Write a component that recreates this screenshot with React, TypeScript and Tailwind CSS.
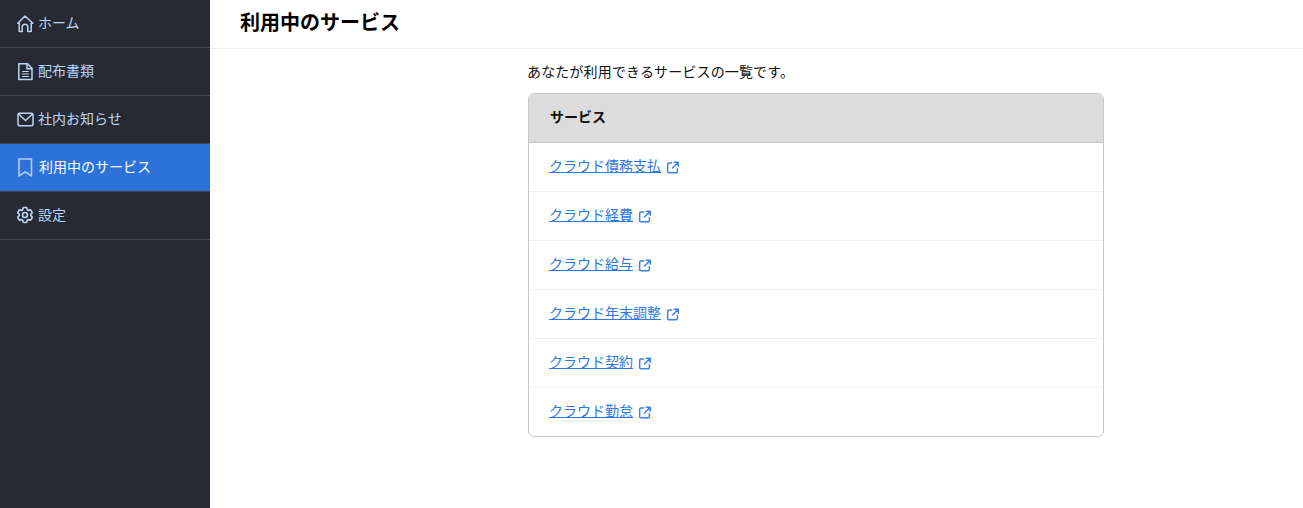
import { HiOutlineCog6Tooth } from 'react-icons/hi2';

const HomeIcon = () => (
  <svg viewBox="0 0 20 20" fill="none" stroke="currentColor" strokeWidth="1.5" strokeLinejoin="round" className="size-5 shrink-0">
    <path d="M2.8 10.2 10 3 17.8 10.2 16.2 10.2V18.5H12.8V14a2.8 2.8 0 0 0-5.6 0V18.5H4.2V10.2Z" />
  </svg>
);

const DocIcon = () => (
  <svg viewBox="0 0 20 20" fill="none" stroke="currentColor" strokeWidth="1.5" strokeLinejoin="round" className="size-5 shrink-0">
    <path d="M3.8 2.8H12.5L17 7.3V18.5H3.8Z" />
    <path d="M12 3V7.8H17" />
    <path d="M7 10.5H13.8M7 13H13.8M7 15.5H13.8" strokeWidth="1.1" />
  </svg>
);

const MailIcon = () => (
  <svg viewBox="0 0 20 20" fill="none" stroke="currentColor" strokeWidth="1.5" strokeLinejoin="round" className="size-5 shrink-0">
    <rect x="3" y="4.2" width="15" height="12.6" rx="1.5" />
    <path d="M3.5 5 10.5 11.5 17.5 5" />
  </svg>
);

const BookmarkIcon = () => (
  <svg viewBox="0 0 20 20" fill="none" stroke="currentColor" strokeWidth="1.6" strokeLinejoin="round" className="size-5 shrink-0">
    <path d="M4 2H16.5V19L10.2 14.8 4 19Z" />
  </svg>
);

const GearIcon = () => <HiOutlineCog6Tooth strokeWidth={2} className="size-5 shrink-0" />;

const NAV_ITEMS = [
  { label: 'ホーム', icon: HomeIcon },
  { label: '配布書類', icon: DocIcon },
  { label: '社内お知らせ', icon: MailIcon },
  { label: '利用中のサービス', icon: BookmarkIcon, active: true },
  { label: '設定', icon: GearIcon },
];

const SERVICES = ['クラウド債務支払', 'クラウド経費', 'クラウド給与', 'クラウド年末調整', 'クラウド契約', 'クラウド勤怠'];

const App = () => {
  return (
    <div className="flex h-[508px] overflow-hidden bg-white text-sm font-['Liberation_Sans','Noto_Sans_CJK_JP',sans-serif] text-[#111]">
      {/* Sidebar */}
      <nav className="w-[210px] shrink-0 bg-[#262a33]">
        {NAV_ITEMS.map((item) => {
          const Icon = item.icon;
          return (
            <div
              key={item.label}
              className={`flex h-12 items-center border-b border-[#44474f] pb-[2px] pl-[15px] ${item.active ? 'gap-[4px] bg-[#2d72d9] text-white' : 'gap-[3px] text-[#bcd5f5]'}`}
            >
              <span className={item.active ? 'text-[#b4cdee]' : ''}>
                <Icon />
              </span>
              <span>{item.label}</span>
            </div>
          );
        })}
      </nav>

      {/* Main */}
      <main className="flex-1">
        <header className="flex h-[49px] items-center border-b border-[#eeeeee] pb-[2px] pl-[30px]">
          <h1 className="text-xl font-bold text-black">利用中のサービス</h1>
        </header>
        <div className="ml-[318px] w-[576px] pt-[13px]">
          <p className="-ml-[1px] h-[31px] leading-[20px] tracking-[0.15px]">あなたが利用できるサービスの一覧です。</p>
          <div className="overflow-hidden rounded-md border border-[#c8c8c8]">
            <div className="flex h-[49px] items-center border-b border-[#c8c8c8] bg-[#dcdcdc] pb-[2px] pl-[21px] font-bold">サービス</div>
            {SERVICES.map((name, i) => (
              <div key={name} className={`flex items-center pl-[20px] ${i < SERVICES.length - 1 ? 'h-[49px] border-b border-[#eeeeee]' : 'h-12'}`}>
                <a href="#" className="mb-[2px] text-[#2d77e0] underline">{name}</a>
                <svg viewBox="0 0 17 17" fill="none" stroke="currentColor" strokeWidth="1.7" strokeLinecap="round" strokeLinejoin="round" className="ml-[4px] size-[15px] text-[#3b82e6]">
                  <path d="M7.5 3.5H4.5A1.5 1.5 0 0 0 3 5V13A1.5 1.5 0 0 0 4.5 14.5H12.5A1.5 1.5 0 0 0 14 13V10" />
                  <path d="M8.5 9 15 2.5M10.5 2.5H15V7" />
                </svg>
              </div>
            ))}
          </div>
        </div>
      </main>
    </div>
  );
};

export default App;
